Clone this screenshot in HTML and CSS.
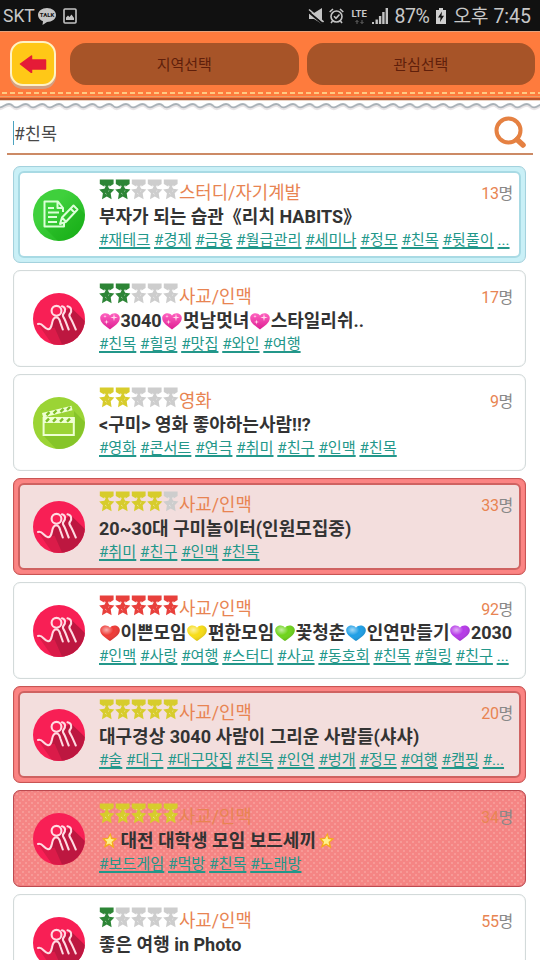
FILE: index.html
```html
<!DOCTYPE html>
<html lang="ko">
<head>
    <meta charset="UTF-8">
    <meta name="viewport" content="width=device-width, initial-scale=1.0">
    <title>모임 검색</title>
    <link rel="stylesheet" href="styles.css">
</head>
<body>
    <svg class="defs" width="0" height="0">
        <defs>
            <linearGradient id="green-bg" x1="0" y1="0" x2="1" y2="1"><stop offset=".35" stop-color="#3fd03c"/><stop offset=".9" stop-color="#1eb51d"/></linearGradient>
            <linearGradient id="pink-heart" x1="0" y1="0" x2="0" y2="1"><stop offset="0" stop-color="#ff62c0"/><stop offset="1" stop-color="#dd1d92"/></linearGradient>
            <radialGradient id="shine" cx=".32" cy=".28" r=".7"><stop offset="0" stop-color="#fff" stop-opacity=".6"/><stop offset=".5" stop-color="#fff" stop-opacity="0"/><stop offset="1" stop-color="#000" stop-opacity=".12"/></radialGradient>
            <clipPath id="round"><circle cx="26" cy="26" r="26"/></clipPath>
            <pattern id="wave" width="16.7" height="10" patternUnits="userSpaceOnUse">
                <path d="M-4.2 6C-1.7 8.7 1 8.3 4 6.3C7 4.3 9.8 3.4 12.5 6C15 8.7 17.7 8.3 20.7 6.3" fill="none" stroke="#e8e4e6" stroke-width="2.5"/>
                <path d="M-4.2 4.5C-1.7 7.2 1 6.8 4 4.8C7 2.8 9.8 1.9 12.5 4.5C15 7.2 17.7 6.8 20.7 4.8" fill="none" stroke="#a9b1b7" stroke-width="1.8"/>
            </pattern>
        </defs>
        <symbol id="medal" viewBox="0 0 16 20">
            <path d="M.8 0h13.800v4.600L11 6.800H4.600L.8 4.600z"/>
            <path d="M7.800 4.800l2.400 4.500 5.200.8-3.700 3.700.9 6-4.800-2.700-4.800 2.700.9-6L.2 10.100l5.200-.8z"/>
            <path d="M4.800 6.300h1.500M9.300 6.300h1.500M6 13.500l1.600 1.300M10.300 11l-1.200 1" fill="none" stroke="#fff" stroke-opacity=".55" stroke-width=".9"/>
        </symbol>
        <symbol id="heart" viewBox="0 0 20 18">
            <path d="M10 17C6 14 .2 11 .2 6.200C.2 1.400 7.200-.2 10 3.800C12.800-.2 19.800 1.400 19.800 6.200C19.800 11 14 14 10 17z"/>
            <path d="M10 17C6 14 .2 11 .2 6.200C.2 1.400 7.200-.2 10 3.800C12.800-.2 19.800 1.400 19.800 6.200C19.800 11 14 14 10 17z" fill="url(#shine)"/>
        </symbol>
        <symbol id="sparkle" viewBox="0 0 20 18">
            <path d="M10 17.500C6 14.300.2 11.200.2 6C.2 1.200 7.200-.6 10 3.600C12.800-.6 19.800 1.200 19.800 6C19.800 11.200 14 14.300 10 17.500z" fill="url(#pink-heart)"/>
            <path d="M14 1.800l.7 3 3 .7-3 .7-.7 3-.7-3-3-.7 3-.7zM6.500 7.500l.5 2 2 .5-2 .5-.5 2-.5-2-2-.5 2-.5zM5 2.600l.4 1.300 1.300.4-1.300.4L5 6l-.4-1.300-1.300-.4 1.300-.4z" fill="#ffdcec"/>
        </symbol>
        <symbol id="star" viewBox="0 0 20 18">
            <path d="M10.500.8l1.500 5 5.500.8-4.500 3.600 1.300 6.300-5-3.600-5.500 3.200 2-5.600L2 6.300l5.700-.3z" fill="#f5ad1a"/>
            <path d="M10.200 3.500l.8 3.500 3.500.6-3 2.300.8 3.600-3.200-2-3 1.600 1-3.400-2.400-2.500 3.400-.2z" fill="#fff08c"/>
        </symbol>
        <symbol id="people" viewBox="0 0 52 52">
            <g clip-path="url(#round)">
                <path d="M0 0h52v52H0z" fill="#f81f55"/>
                <path d="M37.500 14L52 28v24H29L16 36l6-10z" fill="#bd1740"/>
                <path d="M5 31l4.500 1 6 4.500 6-2 8 18H20z" fill="#db1b49"/>
            </g>
            <g fill="none" stroke="#ffdbe2" stroke-width="2.1" stroke-linecap="round" stroke-linejoin="round">
                <circle cx="23.500" cy="17.800" r="4.900"/>
                <path d="M5 31C9.500 29.500 11 35.500 15 36.200C17.500 36.400 18.300 34 19 30.500C19.500 27.500 20 24.500 23 24.300C26.200 24.300 26.700 27 27.500 30L29.800 36.500"/>
                <path d="M29 13.300C32.500 13.800 33 18 30.500 20.800C28.800 22.800 30.500 24 31.500 26C33 29 34.200 33 35.700 36.500"/>
                <path d="M34.500 13.300C38.500 13.800 39.200 18 37 20.800C35.200 22.800 37 24 38 26C39.700 29 41.200 33 42.800 36.500"/>
            </g>
        </symbol>
        <symbol id="study" viewBox="0 0 52 52">
            <circle cx="26" cy="26" r="26" fill="url(#green-bg)"/>
            <path d="M11.500 38.500L25 52h3a26 26 0 0 0 24-27l-8-8-13 21z" fill="#12a512" opacity=".3"/>
            <g fill="none" stroke="#dcffd8" stroke-width="2" stroke-linejoin="round">
                <path d="M30 19L25 12.500H11.500V37.500H31V33M24.500 12.500v6.500H30v4"/>
                <path d="M15 19h6M15 23.500h11M15 28h9M15 33h9"/>
                <path d="M27 35l2-6.500L40.500 16.500l4 4L33 32.800zM37.500 19.500l4 4M29 28.500l4 4.300"/>
            </g>
        </symbol>
        <symbol id="movie" viewBox="0 0 52 52">
            <circle cx="26" cy="26" r="26" fill="#9bd435"/>
            <path d="M10 38l13 14c12 2 28-8 29-27l-11-11v24z" fill="#74b81f" opacity=".55"/>
            <path d="M10.600 24.500v13.500h30.200v-17H10.600z" fill="none" stroke="#eeffd2" stroke-width="2"/>
            <path d="M9 16l29.500-7.200 1 4.500L10.200 20.500z" fill="#eeffd2"/>
            <path d="M10 20.500h31.500V26H10z" fill="#eeffd2"/>
            <path d="M13.500 18.200l3-3M20.500 16.500l3-3M27.500 14.800l3-3M34 13l3-3M13 24.700l3-3M20 24.700l3-3M27 24.700l3-3M34 24.700l3-3" stroke="#7cbd26" stroke-width="2.4"/>
        </symbol>
    </svg>

    <div class="status">
        <span class="carrier">SKT</span>
        <svg class="talk" width="18" height="17" viewBox="0 0 18 17"><path d="M9 0c5 0 9 3 9 7s-4 7-9 7l-4.500 3L5 13.300C2 12.200 0 10 0 7c0-4 4-7 9-7z" fill="#c4c4c4"/><text x="9" y="9.300" text-anchor="middle" font-size="6" fill="#111">TALK</text></svg>
        <svg class="picture" width="14" height="16" viewBox="0 0 14 16"><rect x="1" y="1" width="12" height="14" rx="1" fill="none" stroke="#c4c4c4" stroke-width="1.6"/><path d="M3 12V9.500l2-2 1.500 1.500L8.500 6.500 11 10v2z" fill="#c4c4c4"/></svg>
        <div class="right">
            <svg class="mute" width="16" height="17" viewBox="0 0 16 17"><path d="M1 5h5l8-5v16l-8-5H1z" fill="#c4c4c4"/><path d="M0 3.500l15 12.500" stroke="#111" stroke-width="2"/><path d="M1 1.500l14.500 12.500" stroke="#c4c4c4" stroke-width="1.6"/></svg>
            <svg class="alarm" width="15" height="16" viewBox="0 0 15 16" fill="none" stroke="#c4c4c4" stroke-width="1.6"><circle cx="7.500" cy="8.500" r="5.500"/><path d="M.7 4L4 1M14.300 4L11 1M5 8.300l2 2L10.500 6.500M3.500 13l-1.500 2M11.500 13l1.500 2"/></svg>
            <div class="lte">
                LTE
                <svg width="9" height="4" viewBox="0 0 9 4" fill="none" stroke="#666"><path d="M2 4V.5M.5 2L2 .5 3.500 2M7 0v3.500M5.500 2L7 3.500 8.500 2"/></svg>
            </div>
            <svg class="signal" width="16" height="16" viewBox="0 0 16 16" fill="#c4c4c4"><path d="M0 14h2v2H0zM3.500 11.500h2.400V16H3.500zM6.900 8h2.400v8H6.900zM10.200 4h2.400v12h-2.400zM13.600 0H16v16h-2.400z"/></svg>
            <span class="battery-text">87%</span>
            <svg class="battery" width="10" height="16" viewBox="0 0 10 16"><path d="M3 0h4v2h3v14H0V2h3z" fill="#d0d0d0"/><path d="M6 3.500L2 9.500h2.500L4 14l4-6.200H5.500z" fill="#111"/></svg>
            <span class="ampm">오후</span>
            <span class="time">7:45</span>
        </div>
    </div>

    <div class="header">
        <div class="buttons">
            <div class="back">
                <svg width="28" height="18" viewBox="0 0 28 18"><path d="M1.500 9L12.500 1v4H26.500v9H12.500v3.500z" fill="#e51b37" stroke="#e51b37" stroke-width="1.5" stroke-linejoin="round"/></svg>
            </div>
            <div class="select">지역선택</div>
            <div class="select">관심선택</div>
        </div>
        <div class="stitch"></div>
    </div>
    <svg class="wave" width="540" height="10"><rect width="540" height="10" fill="url(#wave)"/></svg>

    <div class="search-bar">
        <span class="cursor"></span>
        <span class="keyword">#친목</span>
        <svg class="search-icon" width="33" height="34" viewBox="0 0 33 34" fill="none" stroke="#e58142"><circle cx="14.500" cy="14.500" r="12" stroke-width="4"/><path d="M23 23.500l6 5.500" stroke-width="5.5" stroke-linecap="round"/></svg>
    </div>

    <div class="list" id="list"></div>

    <script>
        const groups = [
            { style: 'blue', icon: 'study', medal: 'green', count: 2, category: '스터디/자기계발', members: 13, title: '부자가 되는 습관《리치 HABITS》', tags: '#재테크 #경제 #금융 #월급관리 #세미나 #정모 #친목 #뒷풀이 ...' },
            { style: 'plain', icon: 'people', medal: 'green', count: 2, category: '사교/인맥', members: 17, title: '{sparkle}3040{sparkle}멋남멋녀{sparkle}스타일리쉬..', tags: '#친목 #힐링 #맛집 #와인 #여행' },
            { style: 'plain', icon: 'movie', medal: 'yellow', count: 2, category: '영화', members: 9, title: '&lt;구미&gt; 영화 좋아하는사람!!?', tags: '#영화 #콘서트 #연극 #취미 #친구 #인맥 #친목' },
            { style: 'red', icon: 'people', medal: 'yellow', count: 4, category: '사교/인맥', members: 33, title: '20~30대 구미놀이터(인원모집중)', tags: '#취미 #친구 #인맥 #친목' },
            { style: 'plain', icon: 'people', medal: 'scarlet', count: 5, category: '사교/인맥', members: 92, title: '{heart crimson}이쁜모임{heart gold}편한모임{heart lime}꽃청춘{heart sky}인연만들기{heart violet}2030', tags: '#인맥 #사랑 #여행 #스터디 #사교 #동호회 #친목 #힐링 #친구 ...' },
            { style: 'red', icon: 'people', medal: 'yellow', count: 5, category: '사교/인맥', members: 20, title: '대구경상 3040 사람이 그리운 사람들(샤샤)', tags: '#술 #대구 #대구맛집 #친목 #인연 #벙개 #정모 #여행 #캠핑 #...' },
            { style: 'dots', icon: 'people', medal: 'yellow', count: 5, category: '사교/인맥', members: 34, title: '{star}대전 대학생 모임 보드세끼{star}', tags: '#보드게임 #먹방 #친목 #노래방' },
            { style: 'plain', icon: 'people', medal: 'green', count: 1, category: '사교/인맥', members: 55, title: '좋은 여행 in Photo', tags: '' }
        ];

        function medals(g) {
            let html = '';
            for (let i = 0; i < 5; i++) {
                html += `<svg class="medal ${i < g.count ? g.medal : ''}"><use href="#medal"/></svg>`;
            }
            return html;
        }

        // {heart gold} -> heart emoji in the given color
        function emoji(text) {
            return text.replace(/\{(\w+) ?(\w*)\}/g, '<svg class="emoji $2"><use href="#$1"/></svg>');
        }

        document.getElementById('list').innerHTML = groups.map(g => `
            <div class="card ${g.style}">
                <div class="inner">
                    <svg class="icon"><use href="#${g.icon}"/></svg>
                    <div class="info">
                        <div class="top">${medals(g)}<span class="category">${g.category}</span><span class="members"><b>${g.members}</b>명</span></div>
                        <div class="name">${emoji(g.title)}</div>
                        <div class="tags">${g.tags.split(' ').map(t => `<u>${t}</u>`).join(' ')}</div>
                    </div>
                </div>
            </div>`).join('');
    </script>
</body>
</html>
```
FILE: styles.css
```css
* {
    box-sizing: border-box;
}
body {
    margin: 0;
    height: 960px;
    overflow: hidden;
    background-color: #fff;
    font-family: Roboto, "Noto Sans CJK KR", sans-serif;
}
svg {
    display: block;
    flex-shrink: 0;
}
.defs {
    position: absolute;
}

/* status bar */
.status {
    height: 31px;
    padding: 1px 9px 0 3px;
    background-color: #111;
    color: #c8c8c8;
    display: flex;
    align-items: center;
}
.carrier {
    font-size: 17.5px;
    width: 35px;
}
.talk {
    margin-right: 7px;
    font-weight: bold;
}
.right {
    margin-left: auto;
    display: flex;
    align-items: center;
}
.alarm {
    margin-left: 5px;
}
.lte {
    margin: 0 4px 0 7px;
    width: 17px;
    font-size: 9.5px;
    font-weight: bold;
    line-height: 11px;
}
.lte svg {
    margin: 1px 0 0 4px;
}
.battery-text {
    font-size: 19.5px;
    margin: 0 5px 0 6px;
    width: 37px;
    letter-spacing: -0.4px;
}
.ampm {
    font-size: 19px;
    line-height: 28px;
    margin: 2px 5px 0 7px;
}
.time {
    font-size: 19.5px;
}

/* header */
.header {
    height: 70px;
    background-color: #fe7b3d;
    border-top: 1px solid #e6a27c;
    border-bottom: 1px solid #e9d2c4;
}
.buttons {
    display: flex;
    align-items: flex-start;
    padding: 9px 5px 0 10px;
    height: 59px;
}
.back {
    width: 46px;
    height: 45px;
    border: 2px solid #fff2c4;
    border-radius: 13px;
    background-color: #ffc817;
    box-shadow: 0 3px 0 #d3a083;
    margin-right: 14px;
    display: flex;
    align-items: center;
    justify-content: center;
}
.select {
    flex: 1;
    height: 42px;
    margin: 2px 0 0;
    border-radius: 16px;
    background-color: #a75428;
    color: #5f1f0b;
    font-size: 15px;
    line-height: 44px;
    text-align: center;
}
.select + .select {
    margin-left: 8px;
}
.stitch {
    height: 9px;
    border-bottom: 2px solid #b9562b;
    background: repeating-linear-gradient(to right, #ffc982 0 5px, transparent 5px 8px) 2px 1px / 100% 2px no-repeat,
        linear-gradient(#e9a26b, #e9a26b) 0 5px / 100% 1px no-repeat;
}

/* search */
.search-bar {
    height: 44px;
    margin: 0 7px;
    border-bottom: 2px solid #cc8a65;
    display: flex;
    align-items: center;
    padding: 0 6px;
}
.cursor {
    width: 1px;
    height: 24px;
    margin-top: 2px;
    background-color: #4ba3c0;
}
.keyword {
    flex: 1;
    margin-top: 4px;
    font-size: 17.5px;
    line-height: 24px;
    color: #484848;
}
.search-icon {
    margin-top: 2px;
}

/* list */
.list {
    padding: 11px 14px 0 13px;
}
.card {
    height: 97px;
    margin-bottom: 7px;
    border: 1px solid #d3dada;
    border-radius: 7px;
    padding: 4px;
    box-shadow: inset 0 0 1px #d3dada;
}
.inner {
    height: 100%;
    border: 2px solid transparent;
    border-radius: 6px;
    padding: 4px 6px 0 13px;
    display: flex;
}
.blue {
    background-color: #c9f0f7;
    border-color: #a3d2de;
}
.blue .inner {
    background-color: #fff;
    border-color: #a8dae4;
}
.red {
    background-color: #fb8483;
    border-color: #c95554;
    box-shadow: inset 0 0 1px #c95554;
}
.red .inner {
    background-color: #f3dedd;
    border-color: #cf6261;
}
.dots {
    border-color: #bd4a50;
    background-color: #f58584;
    background-image: radial-gradient(#f79a97 1px, transparent 1.5px), radial-gradient(#f79a97 1px, transparent 1.5px);
    background-size: 6px 6px;
    background-position: 0 0, 3px 3px;
    box-shadow: inset 0 0 1px #bd4a50;
}
.icon {
    width: 52px;
    height: 52px;
    margin: 12px 14px 0 0;
}
.info {
    flex: 1;
    min-width: 0;
    white-space: nowrap;
}
.top {
    display: flex;
    height: 28px;
}
.medal {
    width: 16px;
    height: 21px;
    margin-top: 2px;
    fill: #cdcdcd;
}
.medal.green {
    fill: #2d8536;
}
.medal.yellow {
    fill: #d7cc2c;
}
.medal.scarlet {
    fill: #e8403c;
}
.category {
    margin-top: 2px;
    font-size: 17.8px;
    line-height: 27px;
    color: #e88452;
}
.members {
    margin: 4px 0 0 auto;
    font-size: 16px;
    line-height: 26px;
    color: #888;
    letter-spacing: -0.3px;
}
.members b {
    font-weight: normal;
    color: #e88452;
}
.name {
    height: 23px;
    font-size: 18px;
    line-height: 24px;
    font-weight: bold;
    color: #333;
}
.emoji {
    display: inline-block;
    width: 20px;
    height: 18px;
    margin: 0 0.7px;
    vertical-align: -3px;
}
.emoji.crimson {
    fill: #ee3a36;
}
.emoji.gold {
    fill: #f7dc16;
}
.emoji.lime {
    fill: #6fd41c;
}
.emoji.sky {
    fill: #1f9fe6;
}
.emoji.violet {
    fill: #b63ae8;
}
.tags {
    font-size: 15.2px;
    line-height: 24px;
    color: #23978a;
}
.tags u {
    text-underline-offset: 2px;
    text-decoration-thickness: 1.5px;
}
```
